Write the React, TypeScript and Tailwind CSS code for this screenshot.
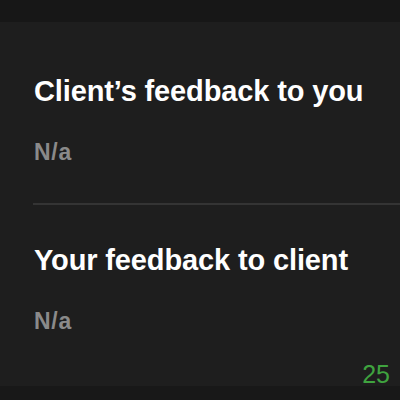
import React from 'react';

const Section = ({ title, value }: { title: string; value: string }) => (
  <div className="flex flex-col">
    <h2 className="text-[29px] leading-[34px] font-bold text-white tracking-[-0.13px]">{title}</h2>
    <p className="mt-[31px] text-[23px] leading-[26px] font-bold text-[#8a8a8a] tracking-[0.7px]">{value}</p>
  </div>
);

export default function App() {
  return (
    <div className="w-[400px] h-[400px] bg-[#1e1e1e] flex flex-col overflow-hidden" style={{ fontFamily: '"Liberation Sans", Arial, sans-serif' }}>
      <div className="h-[22px] bg-[#171717] shrink-0" />
      <div className="flex-1 flex flex-col pt-[52px]">
        <div className="pl-[34px]">
          <Section title="Client’s feedback to you" value="N/a" />
        </div>
        <div className="ml-[33px] mt-[38px] h-[2px] bg-[#343434]" />
        <div className="pl-[34px] mt-[38px]">
          <Section title="Your feedback to client" value="N/a" />
        </div>
        <div className="mt-auto flex justify-end pr-[10px] pb-[0px]">
          <span className="text-[25px] leading-[24px] text-[#3fa33f]">25</span>
        </div>
      </div>
      <div className="h-[14px] bg-[#181818] shrink-0" />
    </div>
  );
}
